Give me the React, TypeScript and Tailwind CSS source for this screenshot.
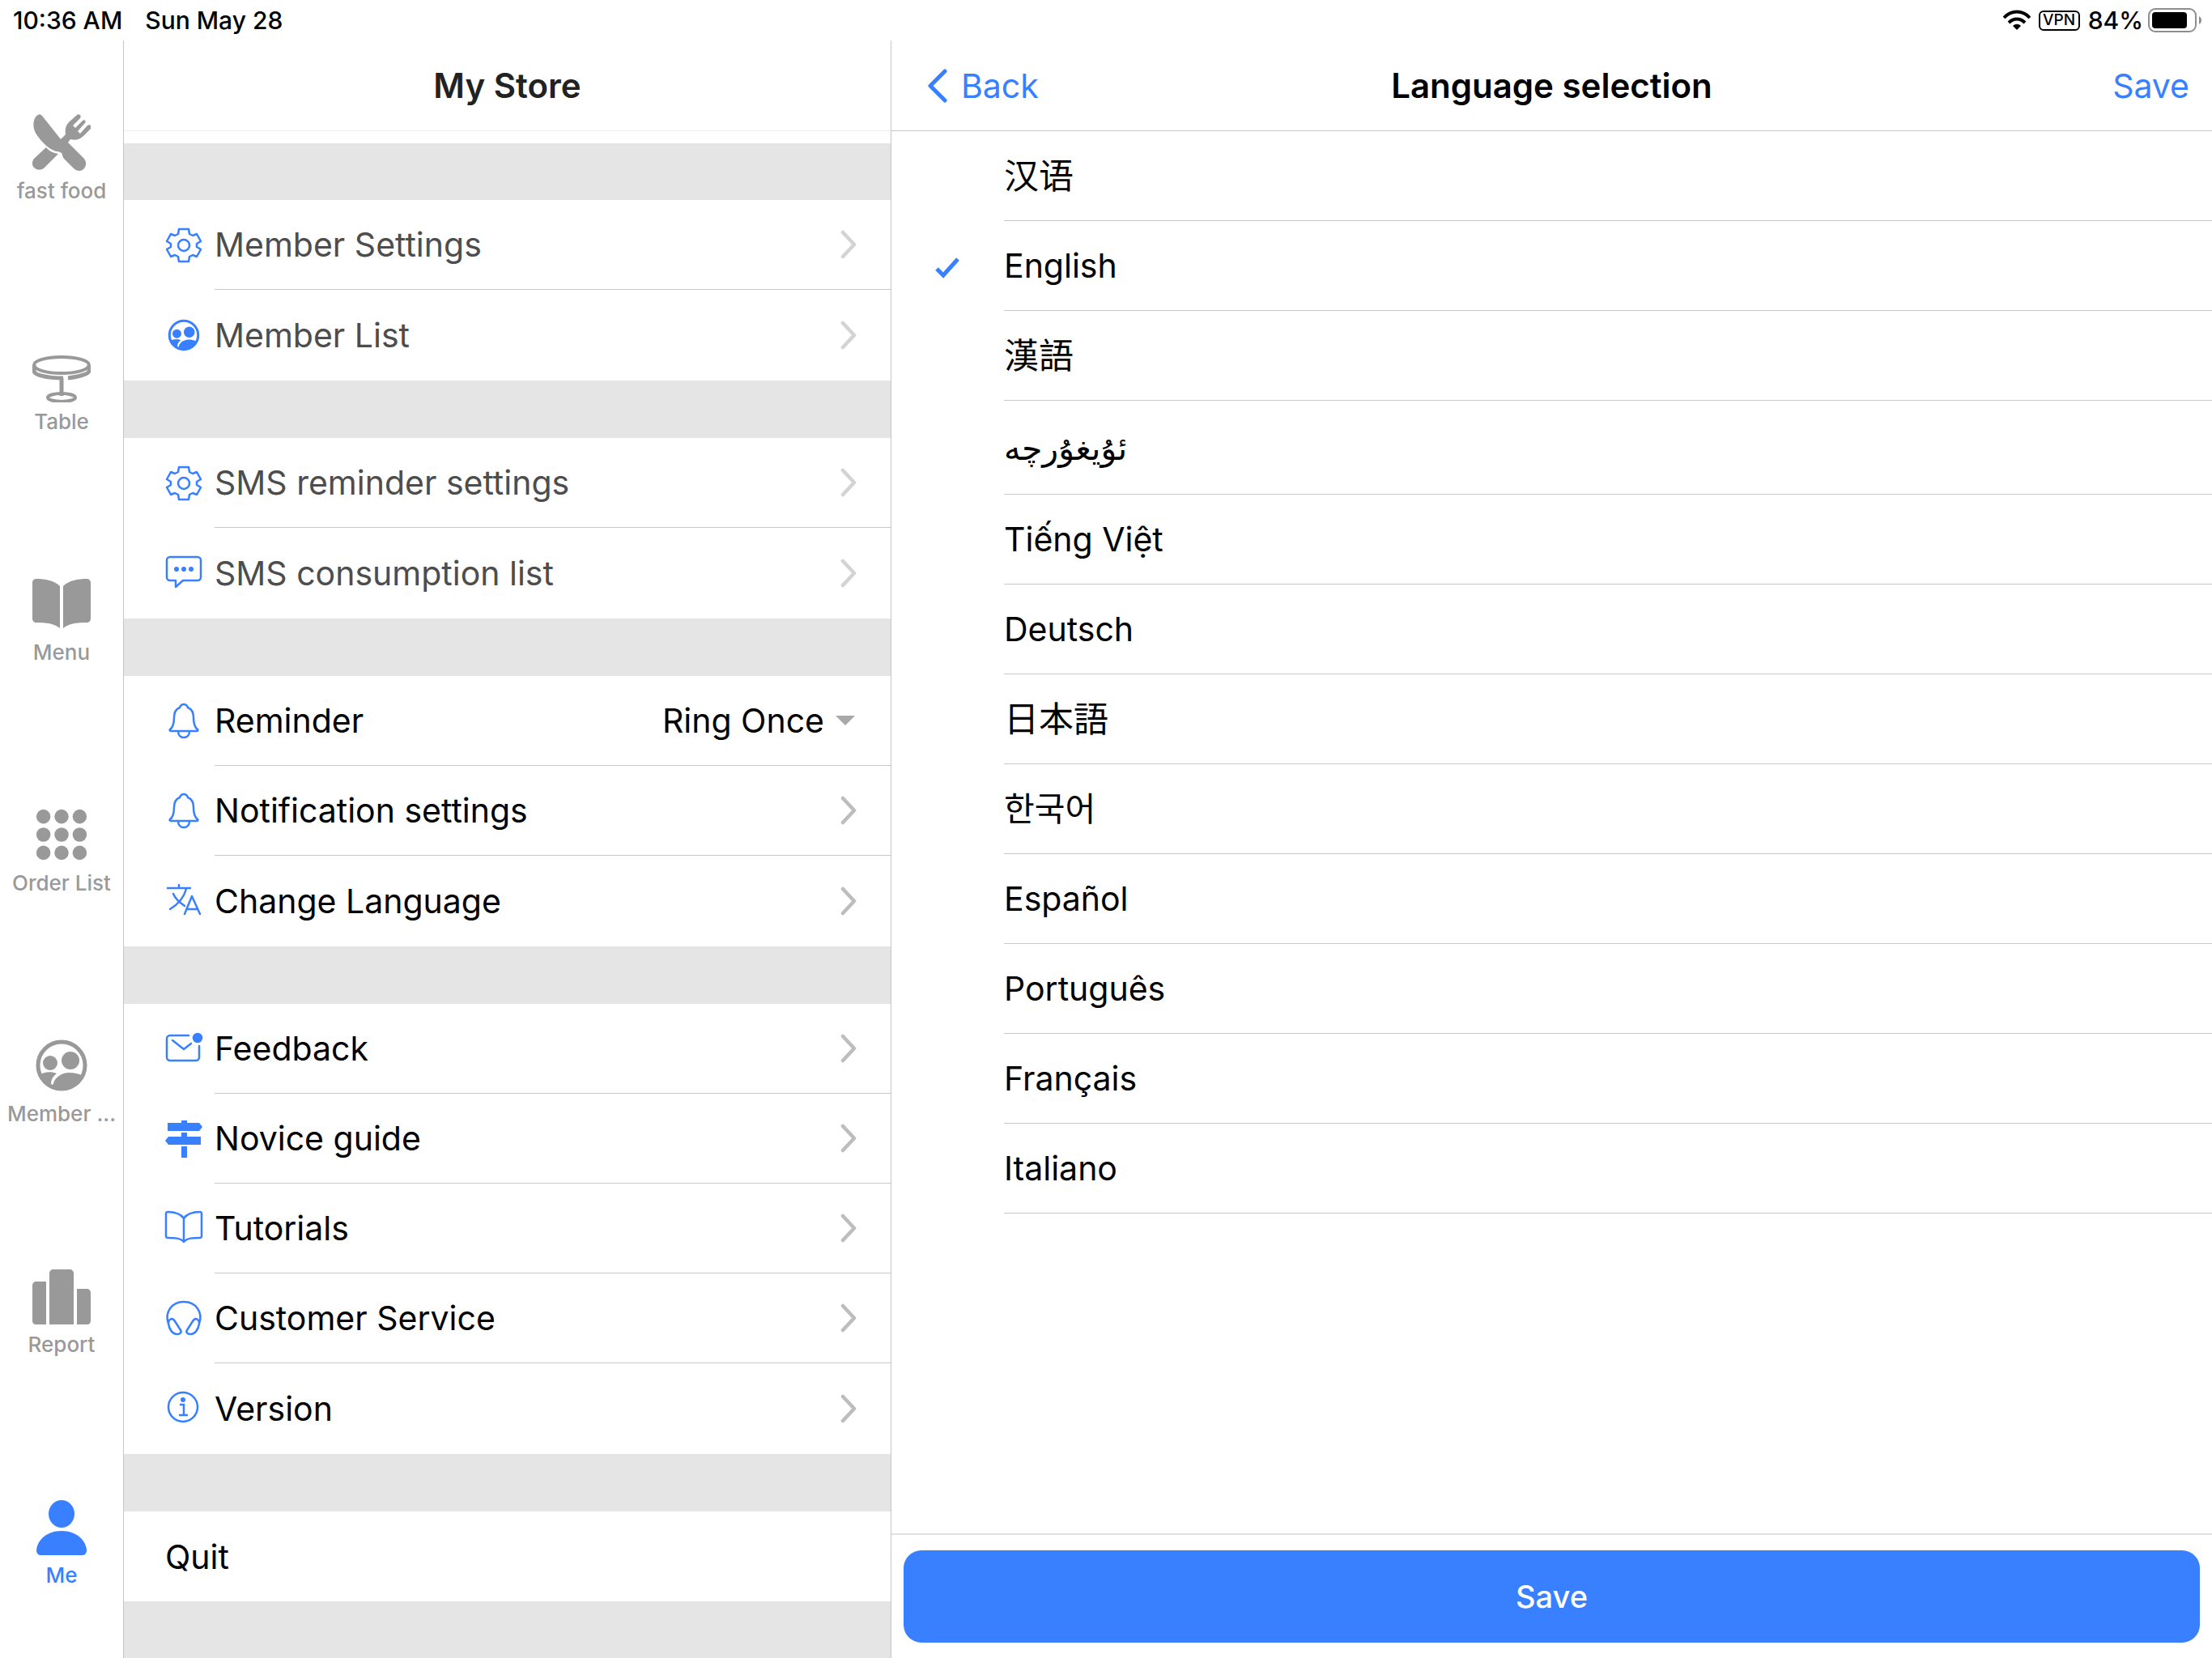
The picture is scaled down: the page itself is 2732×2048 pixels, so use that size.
import type { ReactNode } from "react";
import clsx from "clsx";

interface IconProps {
    className?: string;
}

interface MenuRow {
    label: string;
    icon?: (props: IconProps) => ReactNode;
    muted?: boolean;
    select?: string[];
    plain?: boolean;
}

/* ---------- Icons ---------- */

function FoodIcon({ className }: IconProps) {
    return (
        <svg viewBox="0 1 72 72" className={className} fill="currentColor">
            <path d="M7 3C1 6-1 18 5 27c6 9 15 18 24 21 4 0 7 1 8 4 0 2 1 4 3 6l11 11c4 4 10 4 13 0s3-9-1-13L44 37l3-4c6 2 12 0 16-4l9-9c2-3-1-6-4-4l-9 10-3-3 9-10c2-3-1-5-3-3l-9 9-3-3 9-9c2-3-1-6-4-4l-10 9c-4 4-5 10-4 15l-6 6L12 4c-2-2-4-2-5-1z" />
            <path d="M17 43l-14 13c-4 4-4 9-1 12s9 4 13 0l17-17c-6-1-11-3-15-8z" />
        </svg>
    );
}

function TableIcon({ className }: IconProps) {
    return (
        <svg viewBox="0 -14 72 72" className={className} fill="none" stroke="currentColor" strokeWidth="4">
            <ellipse cx="36" cy="12" rx="34" ry="10" />
            <path d="M2 12v7c0 5 15 9 36 9M70 12v7c0 4-11 7-26 9M36 28v22" strokeWidth="5" />
            <ellipse cx="36" cy="52" rx="17" ry="5" />
        </svg>
    );
}

function MenuIcon({ className }: IconProps) {
    return (
        <svg viewBox="0 0 72 62" className={className} fill="currentColor">
            <path d="M5 0c11 0 22 2 29 9v52c-7-6-17-7-29-7-3 0-5-2-5-5V5c0-3 2-5 5-5zM67 0C56 0 45 2 38 9v52c7-6 17-7 29-7 3 0 5-2 5-5V5c0-3-2-5-5-5z" />
        </svg>
    );
}

function GridIcon({ className }: IconProps) {
    const points = [9, 32, 55];
    return (
        <svg viewBox="-5 -5 74 74" className={className} fill="currentColor">
            {points.map((y) => points.map((x) => <circle key={`${x}-${y}`} cx={x} cy={y} r="9" />))}
        </svg>
    );
}

function MembersIcon({ className }: IconProps) {
    return (
        <svg viewBox="-4 -4 72 72" className={className} fill="currentColor">
            <circle cx="32" cy="32" r="29" fill="none" stroke="currentColor" strokeWidth="5" />
            <circle cx="18" cy="29" r="9" />
            <circle cx="43" cy="26" r="11" />
            <path d="M4 44c6-4 15-5 22-2-5 4-7 8-7 13 1 2 3 1 3-1 2-7 10-13 19-13 7 0 12 1 17 4-4 10-14 17-26 17S8 55 4 44z" />
        </svg>
    );
}

function ReportIcon({ className }: IconProps) {
    return (
        <svg viewBox="0 -3 72 72" className={className} fill="currentColor">
            <path d="M5 15h12v53H4c-2 0-4-2-4-4V20c0-3 2-5 5-5zM26 0h20c3 0 5 2 5 5v63H21V5c0-3 2-5 5-5zM55 24h12c3 0 5 2 5 5v35c0 2-2 4-4 4H55z" />
        </svg>
    );
}

function PersonIcon({ className }: IconProps) {
    return (
        <svg viewBox="-4 -3 72 72" className={className} fill="currentColor">
            <ellipse cx="32" cy="17" rx="16" ry="17" />
            <path d="M32 38c18 0 30 11 31 24 0 3-2 6-5 6H6c-3 0-5-3-5-6 1-13 13-24 31-24z" />
        </svg>
    );
}

function GearIcon({ className }: IconProps) {
    return (
        <svg viewBox="0 0 44 44" className={className} fill="none" stroke="currentColor" strokeWidth="2.5" strokeLinejoin="round">
            <path d="M16 2h12l1 6 4 2 5-2 5 9-5 3v4l5 3-5 9-5-2-4 2-1 6H16l-1-6-4-2-5 2-5-9 5-3v-4l-5-3 5-9 5 2 4-2z" />
            <circle cx="22" cy="22" r="7" />
        </svg>
    );
}

function MessageIcon({ className }: IconProps) {
    return (
        <svg viewBox="0 0 44 44" className={className} fill="none" stroke="currentColor" strokeWidth="2.5" strokeLinejoin="round">
            <path d="M5 2h34a4 4 0 0 1 4 4v21a4 4 0 0 1-4 4H21l-9 8v-8H5a4 4 0 0 1-4-4V6a4 4 0 0 1 4-4z" />
            <g fill="currentColor" stroke="none">
                <circle cx="13" cy="17" r="3" />
                <circle cx="22" cy="17" r="3" />
                <circle cx="31" cy="17" r="3" />
            </g>
        </svg>
    );
}

function BellIcon({ className }: IconProps) {
    return (
        <svg viewBox="0 0 44 44" className={className} fill="none" stroke="currentColor" strokeWidth="2.5" strokeLinejoin="round">
            <path d="M22 1c-2 0-4 1-5 4-5 2-7 6-7 12 0 7-1 10-3 13l-2 2c-1 1 0 2 1 2h32c1 0 2-1 1-2l-2-2c-2-3-3-6-3-13 0-6-2-10-7-12-1-3-3-4-5-4z" />
            <path d="M15 34c0 5 3 8 7 8s7-3 7-8" />
        </svg>
    );
}

function TranslateIcon({ className }: IconProps) {
    return (
        <svg viewBox="0 0 44 44" className={className} fill="none" stroke="currentColor" strokeWidth="2.5" strokeLinecap="round" strokeLinejoin="round">
            <path d="M2 6h28M16 2v4M25 7C22 18 15 26 5 32M9 13c3 7 8 11 14 15M23 38l9-22 10 22M27 32h12" />
        </svg>
    );
}

function FeedbackIcon({ className }: IconProps) {
    return (
        <svg viewBox="0 0 44 44" className={className} fill="none" stroke="currentColor" strokeWidth="2.5" strokeLinecap="round" strokeLinejoin="round">
            <path d="M28 5H5a4 4 0 0 0-4 4v23a4 4 0 0 0 4 4h32a4 4 0 0 0 4-4V18M8 11l14 11 9-7" />
            <circle cx="39" cy="8" r="5" fill="currentColor" />
        </svg>
    );
}

function SignpostIcon({ className }: IconProps) {
    return (
        <svg viewBox="0 0 44 44" className={className} fill="currentColor">
            <path d="M19-1h7v3h15l4 5-4 5H2V2h17zM19 14h7v5h17v10H3l-4-5 4-5h16zM19 31h7v14h-7z" />
        </svg>
    );
}

function BookIcon({ className }: IconProps) {
    return (
        <svg viewBox="2 2 44 44" className={className} fill="none" stroke="currentColor" strokeWidth="2.5" strokeLinejoin="round">
            <path d="M24 11C20 5 12 3 4 3c-1 0-2 1-2 2v28c0 1 1 2 2 2 8 0 16 0 20 5 4-5 12-5 20-5 1 0 2-1 2-2V5c0-1-1-2-2-2-8 0-16 2-20 8zv28" />
        </svg>
    );
}

function HeadphonesIcon({ className }: IconProps) {
    return (
        <svg viewBox="0 1 44 44" className={className} fill="none" stroke="currentColor" strokeWidth="2.5" strokeLinejoin="round">
            <path d="M3 29C-2 15 7 2 22 2s24 13 19 27M3 29c0-6 5-8 8-3l7 11c2 3-1 5-4 5-6 0-10-6-11-13zM41 29c0-6-5-8-8-3l-7 11c-2 3 1 5 4 5 6 0 10-6 11-13z" />
        </svg>
    );
}

function InfoIcon({ className }: IconProps) {
    return (
        <svg viewBox="0 0 44 44" className={className} fill="none" stroke="currentColor" strokeWidth="2.5">
            <circle cx="21" cy="20" r="18" />
            <path d="M17 17h5v12M16 30h11" />
            <circle cx="21" cy="11" r="3" fill="currentColor" stroke="none" />
        </svg>
    );
}

function ChevronIcon({ className }: IconProps) {
    return (
        <svg viewBox="0 0 20 36" className={className} fill="none" stroke="currentColor" strokeLinecap="round" strokeLinejoin="round" strokeWidth="4.5">
            <path d="M3 3l14 15L3 33" />
        </svg>
    );
}

function WifiIcon({ className }: IconProps) {
    return (
        <svg viewBox="0 0 34 26" className={className} fill="none" stroke="currentColor" strokeWidth="4">
            <path d="M1 10c9-10 23-10 32 0M7 16c6-6 14-6 20 0" />
            <path d="M17 25l-5-5c3-3 7-3 10 0z" fill="currentColor" stroke="none" />
        </svg>
    );
}

function BatteryIcon({ className }: IconProps) {
    return (
        <svg viewBox="0 0 66 30" className={className}>
            <rect x="1" y="1" width="58" height="28" rx="8" fill="none" stroke="#8e8e8e" strokeWidth="2" />
            <rect x="5" y="5" width="43" height="20" rx="4" />
            <path d="M63 10c4 2 4 8 0 10z" fill="#8e8e8e" />
        </svg>
    );
}

/* ---------- Data ---------- */

const tabs = [
    { label: "fast food", icon: FoodIcon },
    { label: "Table", icon: TableIcon },
    { label: "Menu", icon: MenuIcon },
    { label: "Order List", icon: GridIcon },
    { label: "Member ...", icon: MembersIcon },
    { label: "Report", icon: ReportIcon },
    { label: "Me", icon: PersonIcon, active: true },
];

const groups: MenuRow[][] = [
    [
        { label: "Member Settings", icon: GearIcon, muted: true },
        { label: "Member List", icon: MembersIcon, muted: true },
    ],
    [
        { label: "SMS reminder settings", icon: GearIcon, muted: true },
        { label: "SMS consumption list", icon: MessageIcon, muted: true },
    ],
    [
        { label: "Reminder", icon: BellIcon, select: ["Ring Once", "Ring Twice"] },
        { label: "Notification settings", icon: BellIcon },
        { label: "Change Language", icon: TranslateIcon },
    ],
    [
        { label: "Feedback", icon: FeedbackIcon },
        { label: "Novice guide", icon: SignpostIcon },
        { label: "Tutorials", icon: BookIcon },
        { label: "Customer Service", icon: HeadphonesIcon },
        { label: "Version", icon: InfoIcon },
    ],
    [{ label: "Quit", plain: true }],
];

const languages = [
    { label: "汉语", lang: "zh-Hans", cjk: true },
    { label: "English", lang: "en", selected: true },
    { label: "漢語", lang: "zh-Hant", cjk: true },
    { label: "ئۇيغۇرچە", lang: "ug" },
    { label: "Tiếng Việt", lang: "vi" },
    { label: "Deutsch", lang: "de" },
    { label: "日本語", lang: "ja", cjk: true },
    { label: "한국어", lang: "ko" },
    { label: "Español", lang: "es" },
    { label: "Português", lang: "pt" },
    { label: "Français", lang: "fr" },
    { label: "Italiano", lang: "it" },
];

/* ---------- Sections ---------- */

function StatusBar() {
    return (
        <div className="flex h-[50px] items-center justify-between pr-[13px] pl-4 text-[30px] font-medium">
            <div className="flex gap-7">
                <span>10:36 AM</span>
                <span>Sun May 28</span>
            </div>
            <div className="flex items-center">
                <WifiIcon className="h-[26px] w-[34px]" />
                <span className="ml-2.5 flex h-[25px] w-[51px] items-center justify-center rounded-md border-2 border-black text-[19px]">VPN</span>
                <span className="ml-2.5">84%</span>
                <BatteryIcon className="ml-1.5 h-[30px] w-[66px]" />
            </div>
        </div>
    );
}

function TabRail() {
    return (
        <nav className="flex w-[153px] shrink-0 flex-col gap-[165px] border-r border-[#c6c6c6] pt-[83px]">
            {tabs.map(({ label, icon: Icon, active }) => (
                <button
                    key={label}
                    className={clsx("flex flex-col items-center", active ? "text-[#3880ff]" : "text-[#999]")}
                >
                    <span className="flex h-[86px] items-center">
                        <Icon className="h-[72px] w-[72px]" />
                    </span>
                    <span className="text-[26px] leading-[34px] font-medium whitespace-nowrap">{label}</span>
                </button>
            ))}
        </nav>
    );
}

function RowContent({ row, last }: { row: MenuRow; last: boolean }) {
    const Icon = row.icon;

    return (
        <>
            {Icon && (
                <span className="flex w-[61px] shrink-0 pl-px">
                    <Icon className="h-11 w-11 overflow-visible text-[#3880ff]" />
                </span>
            )}
            <span className={clsx("flex h-full flex-1 items-center justify-between pr-[42px]", !last && "border-b border-[#c8c8c8]")}>
                <span className={row.muted ? "text-[#4d4d4d]" : "text-black"}>{row.label}</span>
                {row.select ? (
                    <span className="flex items-center gap-3.5">
                        <select aria-label={row.label} className="appearance-none bg-transparent text-right">
                            {row.select.map((option) => (
                                <option key={option}>{option}</option>
                            ))}
                        </select>
                        <svg viewBox="0 0 24 12" className="mr-0.5 h-3 w-6" fill="#a8a8a8">
                            <path d="M0 0h24L12 12z" />
                        </svg>
                    </span>
                ) : (
                    !row.plain && <ChevronIcon className={clsx("h-9 w-5", row.muted ? "text-[#d3d3d3]" : "text-[#bdbdbd]")} />
                )}
            </span>
        </>
    );
}

function StoreMenu() {
    return (
        <section className="flex w-[948px] shrink-0 flex-col border-r border-[#c6c6c6]">
            <h1 className="flex h-[112px] items-center justify-center border-b border-[#ededed] text-[42px] font-semibold text-[#222]">My Store</h1>
            <div className="flex flex-1 flex-col gap-[71px] border-t-[15px] border-white bg-[#e5e5e5] pt-[70px]">
                {groups.map((rows, groupIdx) => (
                    <div key={groupIdx} className={clsx("bg-white", rows.length > 1 && "pb-px")}>
                        {rows.map((row, idx) => {
                            const last = idx === rows.length - 1;
                            const rowClass = "flex h-[111px] w-full items-center pl-[51px] text-left";
                            return row.select ? (
                                <div key={row.label} className={rowClass}>
                                    <RowContent row={row} last={last} />
                                </div>
                            ) : (
                                <button key={row.label} className={rowClass}>
                                    <RowContent row={row} last={last} />
                                </button>
                            );
                        })}
                    </div>
                ))}
            </div>
        </section>
    );
}

function LanguagePanel() {
    return (
        <main className="flex min-w-0 flex-1 flex-col">
            <header className="grid h-[112px] grid-cols-[1fr_auto_1fr] items-center border-b border-[#c8c8c8] text-[#3880ff]">
                <button className="flex items-center gap-4 justify-self-start pl-11">
                    <svg viewBox="0 0 26 42" className="h-[42px] w-[26px]" fill="none" stroke="currentColor" strokeWidth="5" strokeLinecap="round" strokeLinejoin="round">
                        <path d="M22 3L4 21l18 18" />
                    </svg>
                    Back
                </button>
                <h2 className="text-center text-[42px] font-semibold text-black">Language selection</h2>
                <button className="justify-self-end pr-7">Save</button>
            </header>

            <div className="flex-1" role="radiogroup" aria-label="Language selection">
                {languages.map(({ label, lang, selected, cjk }) => (
                    <label key={lang} className="relative flex items-center pl-[50px]">
                        <input type="radio" name="language" value={lang} defaultChecked={selected} className="peer sr-only" />
                        <svg viewBox="0 0 36 36" className="invisible mr-[53px] h-9 w-9 text-[#3880ff] peer-checked:visible" fill="none" stroke="currentColor" strokeWidth="5">
                            <path d="M6 21l8 8L32 9" />
                        </svg>
                        <span
                            lang={lang}
                            className={clsx(
                                "flex flex-1 items-center border-b border-[#c8c8c8]",
                                lang === "ug" ? "h-[116px]" : "h-[111px]",
                                cjk && "text-[43px]"
                            )}
                        >
                            {label}
                        </span>
                    </label>
                ))}
            </div>

            <footer className="border-t-2 border-[#e0e0e0] px-[15px] py-[19px]">
                <button className="h-[114px] w-full rounded-[22px] bg-[#3880ff] text-[38px] font-medium text-white">Save</button>
            </footer>
        </main>
    );
}

export default function App() {
    return (
        <div className="flex min-h-screen flex-col bg-white font-['Inter','Noto_Sans_CJK_SC','DejaVu_Sans',sans-serif] text-[41px] leading-[50px] text-black">
            <StatusBar />
            <div className="flex flex-1">
                <TabRail />
                <StoreMenu />
                <LanguagePanel />
            </div>
        </div>
    );
}
